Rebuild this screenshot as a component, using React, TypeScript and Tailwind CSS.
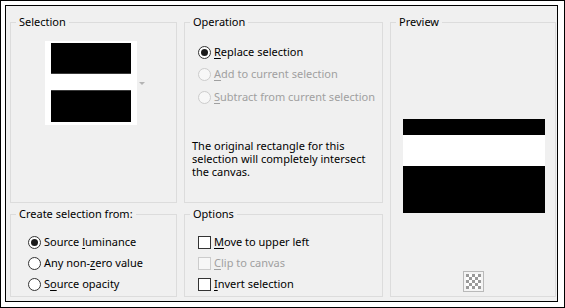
import type { ReactNode } from "react";

function Mn({ children }: { children: ReactNode }) {
  return <span className="underline underline-offset-[2px]">{children}</span>;
}

function Radio({ checked, disabled }: { checked?: boolean; disabled?: boolean }) {
  return (
    <span
      className={
        "flex h-[13px] w-[13px] shrink-0 items-center justify-center rounded-full border " +
        (disabled ? "border-[#cccccc] bg-[#f7f7f7]" : "border-[#333333] bg-white")
      }
    >
      {checked && <span className="h-[7px] w-[7px] rounded-full bg-[#1a1a1a]" />}
    </span>
  );
}

function Check({ disabled }: { disabled?: boolean }) {
  return (
    <span
      className={
        "h-[13px] w-[13px] shrink-0 border " +
        (disabled ? "border-[#cccccc] bg-[#f7f7f7]" : "border-[#333333] bg-white")
      }
    />
  );
}

function Group({ title, className, children }: { title: string; className?: string; children: ReactNode }) {
  return (
    <fieldset className={"min-w-0 border border-[#dcdcdc] " + (className ?? "")}>
      <legend className="ml-[5px] px-[3px] leading-[16px]">{title}</legend>
      {children}
    </fieldset>
  );
}

export default function App() {
  const checker = Array.from({ length: 25 }, (_, i) => i % 2 === 0);

  return (
    <div
      className="h-[308px] w-[565px] border border-black bg-white pb-[5px] pl-[4px] pr-[6px] pt-[4px] text-[11px] text-black"
      style={{ fontFamily: '"Noto Sans", "Open Sans", sans-serif' }}
    >
      <div className="h-full w-full border border-black bg-[#f0f0f0] pb-[4px] pl-[4px] pr-[1px] pt-[8px]">
        <div className="grid grid-cols-[167px_199px_166px] grid-rows-[189px_91px] gap-x-[7px] gap-y-[3px]">
          <Group title="Selection">
            <div className="ml-[34px] mt-[11px] flex items-center gap-[2px]">
              <div className="flex h-[84px] w-[92px] flex-col justify-between bg-white px-[6px] pb-[3px] pt-[2px]">
                <div className="h-[31px] border-b border-[#3a3a3a] bg-black" />
                <div className="h-[32px] border-t border-[#3a3a3a] bg-black" />
              </div>
              <span className="h-0 w-0 border-x-[3px] border-t-[3px] border-x-transparent border-t-[#b4b4b4]" />
            </div>
          </Group>

          <Group title="Operation">
            <div className="mt-[11px] flex flex-col whitespace-nowrap pl-[13px]">
              <label className="flex h-[22px] items-center gap-[3px]">
                <Radio checked />
                <span>
                  <Mn>R</Mn>eplace selection
                </span>
              </label>
              <label className="flex h-[23px] items-center gap-[3px] text-[#a0a0a0]">
                <Radio disabled />
                <span>
                  <Mn>A</Mn>dd to current selection
                </span>
              </label>
              <label className="flex h-[22px] items-center gap-[3px] text-[#a0a0a0]">
                <Radio disabled />
                <span>
                  <Mn>S</Mn>ubtract from current selection
                </span>
              </label>
            </div>
            <p className="mt-[31px] w-[186px] pl-[7px] leading-[13px]">
              The original rectangle for this selection will completely intersect the canvas.
            </p>
          </Group>

          <Group title="Preview" className="row-span-2">
            <div className="ml-[12px] mt-[89px] flex h-[94px] w-[142px] flex-col">
              <div className="h-[16px] bg-black" />
              <div className="h-[31px] bg-white" />
              <div className="h-[47px] bg-black" />
            </div>
            <div className="mx-auto mt-[58px] flex h-[21px] w-[21px] items-center justify-center border border-[#b9b9b9] bg-[#f4f4f4]">
              <div className="grid grid-cols-5">
                {checker.map((dark, i) => (
                  <span key={i} className={"h-[3px] w-[3px] " + (dark ? "bg-[#9a9a9a]" : "bg-white")} />
                ))}
              </div>
            </div>
          </Group>

          <Group title="Create selection from:">
            <div className="mt-[10px] flex flex-col pl-[17px]">
              <label className="flex h-[21px] items-center gap-[3px]">
                <Radio checked />
                <span>
                  Source <Mn>l</Mn>uminance
                </span>
              </label>
              <label className="flex h-[21px] items-center gap-[3px]">
                <Radio />
                <span>
                  Any non-<Mn>z</Mn>ero value
                </span>
              </label>
              <label className="flex h-[21px] items-center gap-[3px]">
                <Radio />
                <span>
                  S<Mn>o</Mn>urce opacity
                </span>
              </label>
            </div>
          </Group>

          <Group title="Options">
            <div className="mt-[10px] flex flex-col pl-[13px]">
              <label className="flex h-[21px] items-center gap-[3px]">
                <Check />
                <span>
                  <Mn>M</Mn>ove to upper left
                </span>
              </label>
              <label className="flex h-[21px] items-center gap-[3px] text-[#a0a0a0]">
                <Check disabled />
                <span>
                  <Mn>C</Mn>lip to canvas
                </span>
              </label>
              <label className="flex h-[21px] items-center gap-[3px]">
                <Check />
                <span>
                  <Mn>I</Mn>nvert selection
                </span>
              </label>
            </div>
          </Group>
        </div>
      </div>
    </div>
  );
}
